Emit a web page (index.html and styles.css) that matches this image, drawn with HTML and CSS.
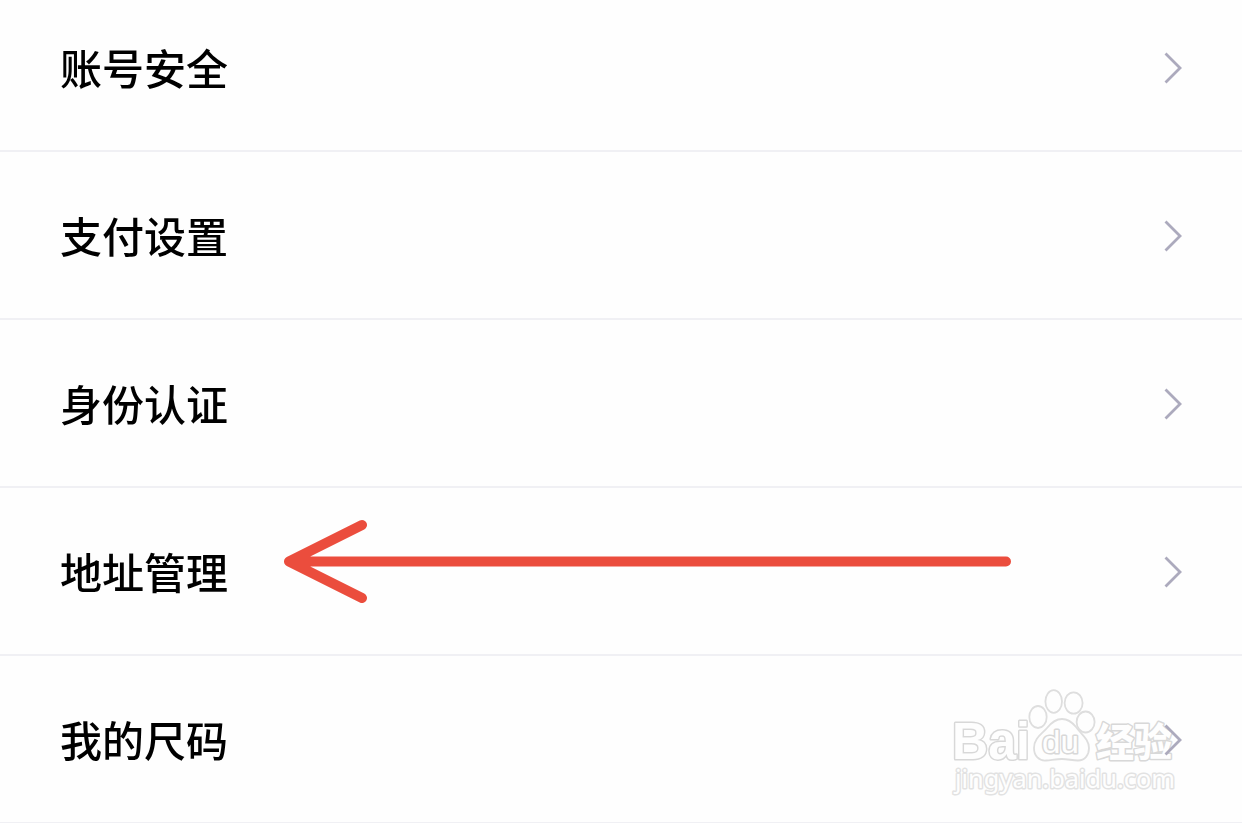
FILE: index.html
```
<!DOCTYPE html>
<html lang="zh-CN">
<head>
    <meta charset="UTF-8">
    <meta name="viewport" content="width=device-width, initial-scale=1.0">
    <title>设置</title>
    <link rel="stylesheet" href="styles.css">
</head>
<body>
    <div class="settings">
        <div class="settings-item">
            <span class="item-label">账号安全</span>
            <svg class="chevron" viewBox="0 0 20 32"><path d="M2.5 1.5 L17 16 L2.5 30.5"/></svg>
        </div>
        <div class="settings-item">
            <span class="item-label">支付设置</span>
            <svg class="chevron" viewBox="0 0 20 32"><path d="M2.5 1.5 L17 16 L2.5 30.5"/></svg>
        </div>
        <div class="settings-item">
            <span class="item-label">身份认证</span>
            <svg class="chevron" viewBox="0 0 20 32"><path d="M2.5 1.5 L17 16 L2.5 30.5"/></svg>
        </div>
        <div class="settings-item">
            <span class="item-label">地址管理</span>
            <svg class="chevron" viewBox="0 0 20 32"><path d="M2.5 1.5 L17 16 L2.5 30.5"/></svg>
        </div>
        <div class="settings-item">
            <span class="item-label">我的尺码</span>
            <svg class="chevron" viewBox="0 0 20 32"><path d="M2.5 1.5 L17 16 L2.5 30.5"/></svg>
        </div>

        <!-- Red arrow -->
        <svg class="arrow" viewBox="0 0 740 100">
            <path d="M82 15 L9 51.5 L82 88 M9 51.5 H726"/>
        </svg>

        <!-- Watermark -->
        <svg class="watermark" viewBox="0 0 242 120">
            <g class="mark-shape">
                <ellipse cx="88" cy="37" rx="8.7" ry="11"/>
                <ellipse cx="103.7" cy="21.5" rx="8.3" ry="11.3"/>
                <ellipse cx="123.6" cy="23" rx="9" ry="10.7"/>
                <ellipse cx="135.6" cy="42" rx="9" ry="10.5"/>
                <path d="M112 39 C105 39 101 43 97 48 C92 54 84 58 84 68 C84 76 89 81 96 80.5 C102 80 106 79 112 79 C118 79 122 80.5 128 80.5 C135 80.5 139 75 139 68 C139 59 131 54 126 47 C122 42 118 39 112 39 Z"/>
            </g>
            <text class="mark-text mark-latin" x="2" y="79" textLength="78" lengthAdjust="spacingAndGlyphs">Bai</text>
            <text class="mark-text mark-du" x="92" y="73" textLength="37" lengthAdjust="spacingAndGlyphs">du</text>
            <text class="mark-text mark-cn" x="146" y="76" textLength="76" lengthAdjust="spacingAndGlyphs">经验</text>
            <text class="mark-text mark-url" x="5" y="108" textLength="220" lengthAdjust="spacingAndGlyphs">jingyan.baidu.com</text>
        </svg>
    </div>
</body>
</html>
```
FILE: styles.css
```
/* Reset and Base Styles */
body, html {
    margin: 0;
    padding: 0;
    height: 100%;
    overflow: hidden;
    font-family: "Noto Sans CJK SC", sans-serif;
    background-color: #fefefe;
}

/* Settings List */
.settings {
    position: relative;
    height: 823px;
    overflow: hidden;
}

.settings-item {
    display: flex;
    align-items: center;
    justify-content: space-between;
    box-sizing: border-box;
    height: 168px;
    padding: 0 59px 0 60px;
    border-bottom: 2px solid #f0f0f4;
}

/* The list is scrolled a little past the top of the first row */
.settings-item:first-child {
    margin-top: -16px;
}

.item-label {
    font-size: 42px;
    font-weight: 500;
    line-height: 62px;
    color: #000;
    will-change: transform;
}

.chevron {
    position: relative;
    z-index: 1;
    width: 20px;
    height: 32px;
    margin-top: 2px;
    fill: none;
    stroke: #acaabd;
    stroke-width: 2.8;
}

/* Red Arrow */
.arrow {
    position: absolute;
    left: 280px;
    top: 510px;
    width: 740px;
    height: 100px;
    fill: none;
    stroke: #eb4d3d;
    stroke-width: 10;
    stroke-linecap: round;
    stroke-linejoin: round;
}

/* Watermark */
.watermark {
    position: absolute;
    left: 950px;
    top: 680px;
    width: 242px;
    height: 120px;
}

.mark-shape {
    fill: #fefefe;
    stroke: #dedede;
    stroke-width: 1.8;
}

.mark-text {
    fill: #fefefe;
    stroke: #d8d8d8;
    stroke-width: 3;
    stroke-linejoin: round;
    paint-order: stroke;
}

.mark-latin {
    font: bold 51px "Liberation Sans", sans-serif;
}

.mark-du {
    font: 32px "Liberation Sans", sans-serif;
}

.mark-cn {
    font: 900 39px "Noto Sans CJK SC", sans-serif;
}

.mark-url {
    font: 26px "Noto Sans", sans-serif;
    stroke: #e2e2e2;
}
```
